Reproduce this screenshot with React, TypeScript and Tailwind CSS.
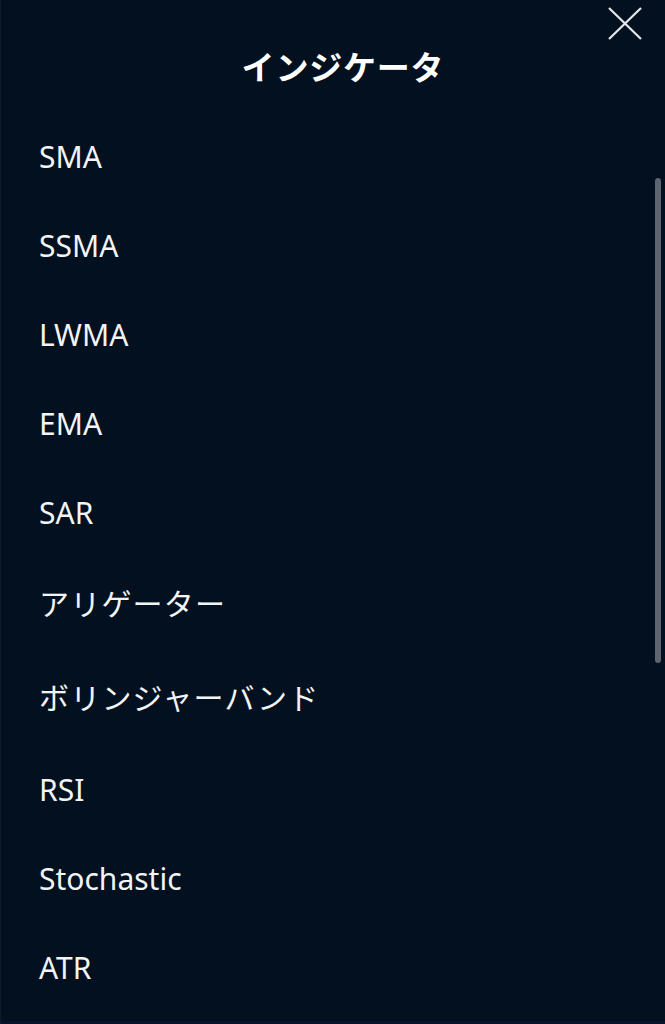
import React from "react";

const items: { label: string; h: string; jp?: boolean }[] = [
  { label: "SMA", h: "h-[89px]" },
  { label: "SSMA", h: "h-[89px]" },
  { label: "LWMA", h: "h-[89px]" },
  { label: "EMA", h: "h-[89px]" },
  { label: "SAR", h: "h-[89px]" },
  { label: "アリゲーター", h: "h-[93px]", jp: true },
  { label: "ボリンジャーバンド", h: "h-[95px]", jp: true },
  { label: "RSI", h: "h-[89px]" },
  { label: "Stochastic", h: "h-[89px]" },
  { label: "ATR", h: "h-[89px]" },
];

export default function App() {
  return (
    <div
      className="relative w-[665px] h-[1024px] overflow-hidden bg-[#02101f] border-l border-[#0b1c30] text-[#f2f4f6]"
      style={{ fontFamily: '"Noto Sans", "Noto Sans CJK JP", sans-serif' }}
    >
      <div className="absolute left-[-1px] top-[272px] w-[1px] h-[19px] bg-[#2f8fd6]" />
      <div className="h-[112px] flex justify-center pt-[44px] pl-[20px]">
        <h1 className="text-[33px] leading-[48px] font-bold tracking-[0.8px] text-white">インジケータ</h1>
      </div>
      <button className="absolute top-[7px] right-[23px] w-[34px] h-[33px]" aria-label="close">
        <svg viewBox="0 0 34 33" className="w-full h-full" fill="none" stroke="#e6e8ea" strokeWidth="2.2">
          <line x1="1" y1="1" x2="33" y2="32" />
          <line x1="33" y1="1" x2="1" y2="32" />
        </svg>
      </button>
      <ul className="flex flex-col">
        {items.map((it) => (
          <li
            key={it.label}
            className={`${it.h} flex items-center pl-[38px] text-[30px] leading-none ${it.jp ? "tracking-[1.2px]" : ""}`}
          >
            {it.label}
          </li>
        ))}
      </ul>
      <div className="absolute right-[4px] top-[178px] w-[6px] h-[485px] rounded-full bg-[#5d6570]" />
      <div className="absolute left-0 right-0 bottom-0 h-[3px] bg-[#061528]" />
    </div>
  );
}
